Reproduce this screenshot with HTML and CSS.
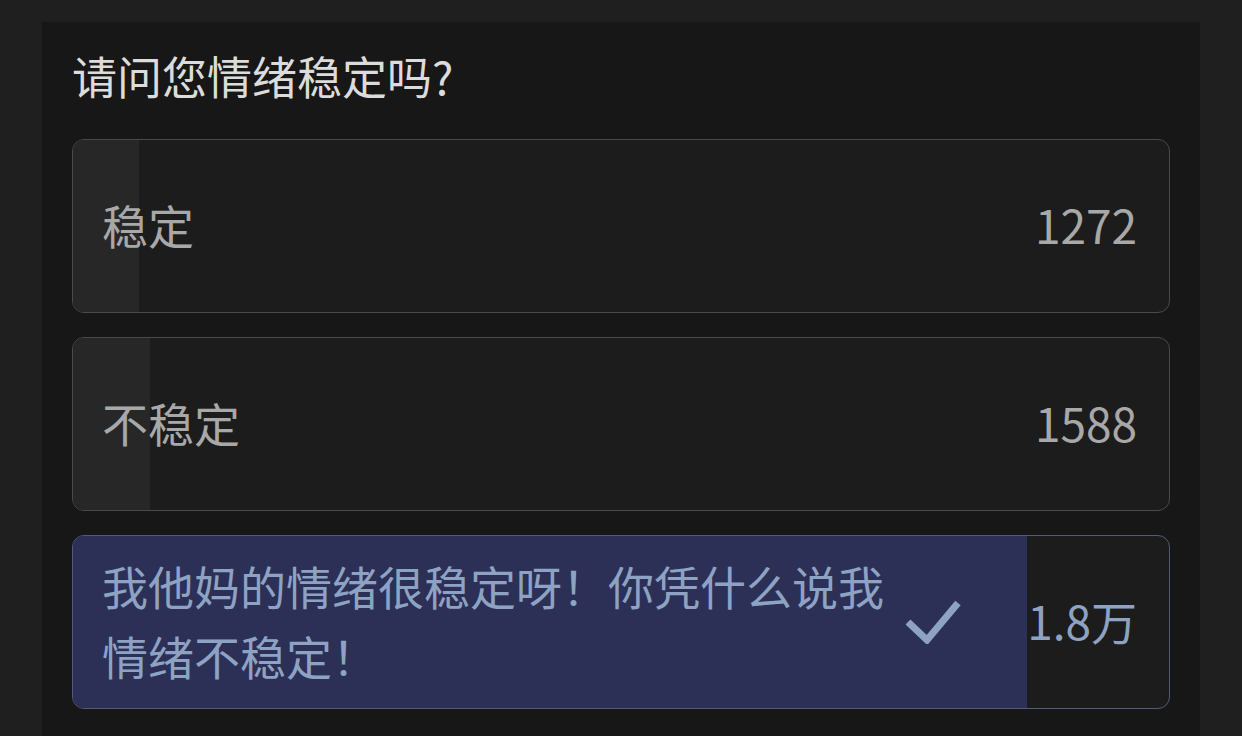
FILE: index.html
```html
<!DOCTYPE html>
<html lang="zh-CN">
<head>
  <meta charset="UTF-8" />
  <meta name="viewport" content="width=device-width, initial-scale=1.0"/>
  <title>投票</title>
  <link rel="stylesheet" href="styles.css">
</head>
<body>
  <div class="panel">
    <h1 class="question">请问您情绪稳定吗?</h1>

    <div class="option">
      <div class="bar" style="width: 6%;"></div>
      <span class="label">稳定</span>
      <span class="count">1272</span>
    </div>

    <div class="option">
      <div class="bar" style="width: 7%;"></div>
      <span class="label">不稳定</span>
      <span class="count">1588</span>
    </div>

    <div class="option voted">
      <div class="bar" style="width: 87%;"></div>
      <span class="label">我他妈的情绪很稳定呀！你凭什么说我情绪不稳定！</span>
      <svg class="check" viewBox="0 0 56 44" width="56" height="44">
        <path d="M3 22 L22 40 L53 3" fill="none" stroke="currentColor" stroke-width="7" stroke-linejoin="miter"/>
      </svg>
      <span class="count">1.8万</span>
    </div>
  </div>
</body>
</html>
```

FILE: styles.css
```css
body {
  margin: 0;
  background: #1f1f1f;
  font-family: "Noto Sans CJK SC", "Noto Sans", sans-serif;
  height: 736px;
  overflow: hidden;
}
.panel {
  box-sizing: border-box;
  height: 714px;
  margin: 22px 42px 0 42px;
  background: #171717;
  padding: 22px 30px 0 30px;
}
.question {
  margin: 0 0 31px 0;
  font-size: 45px;
  font-weight: 400;
  line-height: 64px;
  color: #dcdcdc;
}
.option {
  position: relative;
  display: flex;
  align-items: center;
  min-height: 172px;
  margin-bottom: 24px;
  padding: 0 32px 0 29px;
  background: #1c1c1c;
  border: 1px solid #4a4a4a;
  border-radius: 12px;
  overflow: hidden;
  color: #a8a8a8;
  font-size: 46px;
}
.option:last-child {
  margin-bottom: 0;
}
.bar {
  position: absolute;
  left: 0;
  top: 0;
  bottom: 0;
  background: #272727;
}
.label {
  position: relative;
  flex: 1;
  line-height: 70px;
  margin-top: -4px;
}
.count {
  position: relative;
  margin-top: -4px;
}
.voted {
  border-color: #525a78;
  color: #8ea2c3;
}
.voted .bar {
  background: #2c3056;
}
.voted .label {
  flex: 0 0 790px;
}
.check {
  position: relative;
  margin-left: 13px;
  color: #8ea2c3;
}
.voted .count {
  margin-left: auto;
}
```
